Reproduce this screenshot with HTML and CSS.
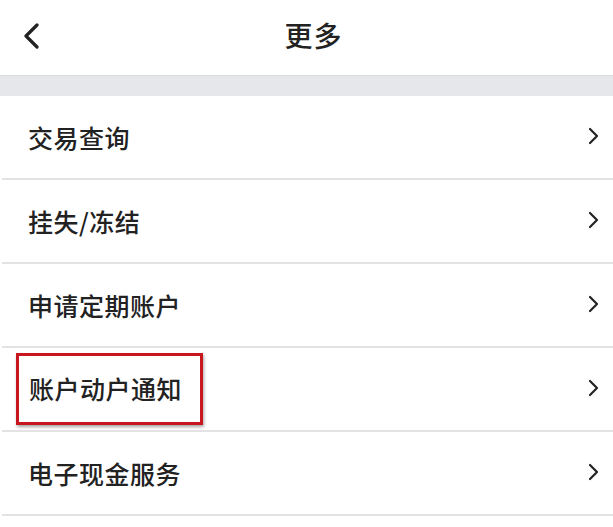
FILE: index.html
```html
<!DOCTYPE html>
<html lang="zh-CN">
<head>
    <meta charset="UTF-8">
    <meta name="viewport" content="width=device-width, initial-scale=1.0">
    <title>更多</title>
    <link rel="stylesheet" href="styles.css">
</head>
<body>
    <div class="page">
        <header class="nav-bar">
            <span class="back">
                <svg width="18" height="26" viewBox="0 0 18 26"><path d="M15 2 L4 13 L15 24" fill="none" stroke="#222" stroke-width="3.2" stroke-linecap="round" stroke-linejoin="round"/></svg>
            </span>
            <h1 class="title">更多</h1>
        </header>
        <div class="spacer"></div>
        <ul class="menu">
            <li class="menu-item"><span class="label">交易查询</span><span class="arrow"><svg width="11" height="18" viewBox="0 0 11 18"><path d="M2 2 L9 9 L2 16" fill="none" stroke="#222" stroke-width="2.2" stroke-linecap="round" stroke-linejoin="round"/></svg></span></li>
            <li class="menu-item"><span class="label">挂失/冻结</span><span class="arrow"><svg width="11" height="18" viewBox="0 0 11 18"><path d="M2 2 L9 9 L2 16" fill="none" stroke="#222" stroke-width="2.2" stroke-linecap="round" stroke-linejoin="round"/></svg></span></li>
            <li class="menu-item"><span class="label">申请定期账户</span><span class="arrow"><svg width="11" height="18" viewBox="0 0 11 18"><path d="M2 2 L9 9 L2 16" fill="none" stroke="#222" stroke-width="2.2" stroke-linecap="round" stroke-linejoin="round"/></svg></span></li>
            <li class="menu-item"><span class="label marked">账户动户通知</span><span class="arrow"><svg width="11" height="18" viewBox="0 0 11 18"><path d="M2 2 L9 9 L2 16" fill="none" stroke="#222" stroke-width="2.2" stroke-linecap="round" stroke-linejoin="round"/></svg></span></li>
            <li class="menu-item"><span class="label">电子现金服务</span><span class="arrow"><svg width="11" height="18" viewBox="0 0 11 18"><path d="M2 2 L9 9 L2 16" fill="none" stroke="#222" stroke-width="2.2" stroke-linecap="round" stroke-linejoin="round"/></svg></span></li>
        </ul>
    </div>
</body>
</html>
```

FILE: styles.css
```css
body {
    margin: 0;
    background: #fff;
    font-family: "Noto Sans CJK SC", "Noto Sans", sans-serif;
    color: #222;
}

.page {
    width: 613px;
    height: 527px;
    overflow: hidden;
}

.nav-bar {
    position: relative;
    height: 76px;
    display: flex;
    align-items: center;
    justify-content: center;
    border-bottom: 1px solid #dcdcdf;
    box-sizing: border-box;
}

.back {
    position: absolute;
    left: 22px;
    top: 23px;
    display: flex;
}

.title {
    margin: 0;
    font-size: 28px;
    font-weight: 500;
    letter-spacing: 1px;
    padding: 0 0 6px 14px;
}

.spacer {
    height: 20px;
    background: #e6e7eb;
}

.menu {
    list-style: none;
    margin: 0;
    padding: 0 0 0 2px;
}

.menu-item {
    height: 84px;
    display: flex;
    align-items: center;
    justify-content: space-between;
    border-bottom: 2px solid #e3e3e3;
    box-sizing: border-box;
    padding: 0 14px 0 26px;
}

.label {
    font-size: 25px;
    font-weight: 500;
    letter-spacing: 0.5px;
}

.label.marked {
    margin-left: -12px;
    padding: 14px 18px 16px 10px;
    border: 3px solid #c8161e;
    box-shadow: 1px 2px 3px rgba(0, 0, 0, 0.35);
}

.arrow {
    display: flex;
    margin-top: -2px;
}
```
